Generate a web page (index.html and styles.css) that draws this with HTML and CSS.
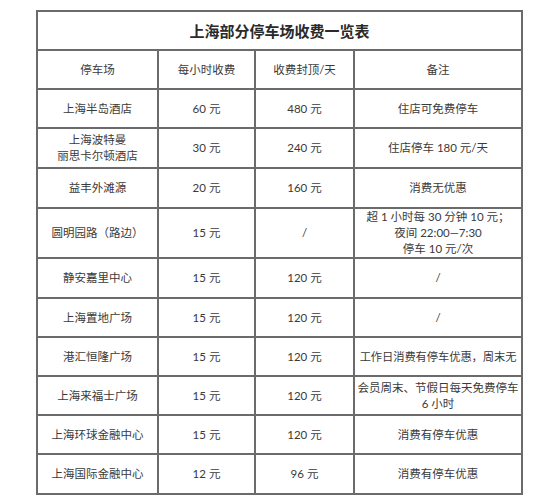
FILE: index.html
```html
<!DOCTYPE html>
<html lang="zh-CN">
<head>
<meta charset="utf-8">
<title>上海部分停车场收费一览表</title>
<link rel="stylesheet" href="styles.css">
</head>
<body>
<div class="page">
<table class="fees">
  <colgroup>
    <col class="c-name">
    <col class="c-hour">
    <col class="c-cap">
    <col class="c-note">
  </colgroup>
  <tr class="h39"><th class="title" colspan="4">上海部分停车场收费一览表</th></tr>
  <tr class="h39"><td>停车场</td><td>每小时收费</td><td>收费封顶/天</td><td>备注</td></tr>
  <tr class="h39"><td>上海半岛酒店</td><td>60 元</td><td>480 元</td><td>住店可免费停车</td></tr>
  <tr class="h40"><td>上海波特曼<br>丽思卡尔顿酒店</td><td>30 元</td><td>240 元</td><td>住店停车 180 元/天</td></tr>
  <tr class="h40"><td>益丰外滩源</td><td>20 元</td><td>160 元</td><td>消费无优惠</td></tr>
  <tr class="h50"><td>圆明园路（路边）</td><td>15 元</td><td>/</td><td>超 1 小时每 30 分钟 10 元；<br>夜间 22:00—7:30<br>停车 10 元/次</td></tr>
  <tr class="h40"><td>静安嘉里中心</td><td>15 元</td><td>120 元</td><td>/</td></tr>
  <tr class="h39"><td>上海置地广场</td><td>15 元</td><td>120 元</td><td>/</td></tr>
  <tr class="h39"><td>港汇恒隆广场</td><td>15 元</td><td>120 元</td><td class="tight">工作日消费有停车优惠，周末无</td></tr>
  <tr class="h39"><td>上海来福士广场</td><td>15 元</td><td>120 元</td><td>会员周末、节假日每天免费停车<br>6 小时</td></tr>
  <tr class="h39"><td>上海环球金融中心</td><td>15 元</td><td>120 元</td><td>消费有停车优惠</td></tr>
  <tr class="h40"><td>上海国际金融中心</td><td>12 元</td><td>96 元</td><td>消费有停车优惠</td></tr>
</table>
</div>
</body>
</html>
```
FILE: styles.css
```css
html, body {
  margin: 0;
  padding: 0;
  background: #ffffff;
}
.page {
  padding: 10px 0 0 36px;
}
.fees {
  border-collapse: collapse;
  table-layout: fixed;
  width: 485px;
  font-family: "Lato", "Noto Sans CJK SC", sans-serif;
  font-size: 11.5px;
  color: #3a3a3a;
  border: 2px solid #666;
}
.c-name { width: 121px; }
.c-hour { width: 97px; }
.c-cap { width: 99px; }
.c-note { width: 168px; }
.fees td, .fees th {
  border: 2px solid #6b6b6b;
  text-align: center;
  vertical-align: middle;
  padding: 0;
  line-height: 16px;
  white-space: nowrap;
}
.fees .title {
  font-family: "Noto Sans CJK SC", sans-serif;
  font-size: 15px;
  font-weight: 700;
  color: #2a2a2a;
}
.fees .tight {
  font-size: 11.3px;
  letter-spacing: -0.1px;
}
.h39 { height: 39px; }
.h40 { height: 40px; }
.h50 { height: 50px; }
```
